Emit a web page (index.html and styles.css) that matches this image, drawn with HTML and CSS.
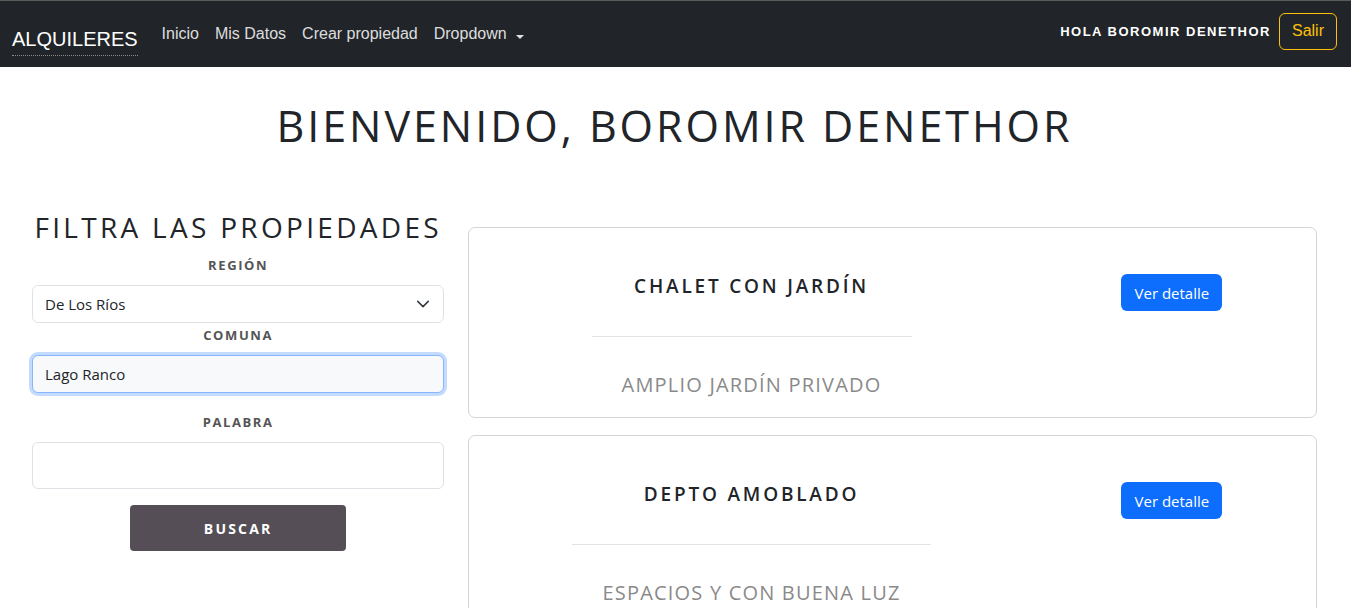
FILE: index.html
```html
<!DOCTYPE html>
<html lang="es">
<head>
<meta charset="utf-8">
<title>Alquileres</title>
<link rel="stylesheet" href="styles.css">
</head>
<body>
<nav class="navbar">
  <div class="nav-left">
    <a class="brand" href="#">ALQUILERES</a>
    <ul class="nav-links">
      <li><a href="#">Inicio</a></li>
      <li><a href="#">Mis Datos</a></li>
      <li><a href="#">Crear propiedad</a></li>
      <li><a href="#" class="dropdown">Dropdown <span class="caret"></span></a></li>
    </ul>
  </div>
  <div class="nav-right">
    <span class="greeting">HOLA BOROMIR DENETHOR</span>
    <button class="btn-salir">Salir</button>
  </div>
</nav>

<main class="page">
  <h1 class="welcome">BIENVENIDO, BOROMIR DENETHOR</h1>
  <div class="row">
    <aside class="col-filter">
      <h2 class="filter-title">FILTRA LAS PROPIEDADES</h2>
      <form class="filter-form">
        <label class="lbl lbl-region">REGIÓN</label>
        <div class="select-wrap">
          <select class="field select">
            <option>De Los Ríos</option>
          </select>
          <svg class="chev" width="14" height="14" viewBox="0 0 16 16"><path d="M2 5l6 6 6-6" fill="none" stroke="#343a40" stroke-width="1.8" stroke-linecap="round" stroke-linejoin="round"/></svg>
        </div>
        <label class="lbl lbl-comuna">COMUNA</label>
        <input class="field focused" type="text" value="Lago Ranco">
        <label class="lbl lbl-palabra">PALABRA</label>
        <input class="field tall" type="text" value="">
        <button type="button" class="btn-buscar">BUSCAR</button>
      </form>
    </aside>
    <section class="col-list">
      <article class="card">
        <div class="card-main">
          <div class="card-text">
            <h3 class="card-title">CHALET CON JARDÍN</h3>
            <hr class="sep">
            <p class="card-sub">AMPLIO JARDÍN PRIVADO</p>
          </div>
        </div>
        <div class="card-side">
          <button class="btn-detalle">Ver detalle</button>
        </div>
      </article>
      <article class="card">
        <div class="card-main">
          <div class="card-text">
            <h3 class="card-title">DEPTO AMOBLADO</h3>
            <hr class="sep">
            <p class="card-sub">ESPACIOS Y CON BUENA LUZ</p>
          </div>
        </div>
        <div class="card-side">
          <button class="btn-detalle">Ver detalle</button>
        </div>
      </article>
    </section>
  </div>
</main>
</body>
</html>
```

FILE: styles.css
```css
* { box-sizing: border-box; }
html, body { margin: 0; padding: 0; }
body {
  background: #fff;
  font-family: "Open Sans", "Noto Sans", sans-serif;
  color: #212529;
  overflow: hidden;
}

.navbar {
  height: 67px;
  background: #212529;
  border-top: 1px solid #5a5a5a;
  display: flex;
  align-items: center;
  justify-content: space-between;
  padding: 0 14px 0 12px;
  font-family: "Liberation Sans", Arial, sans-serif;
}
.nav-left { display: flex; align-items: center; }
.brand {
  color: #fff;
  text-decoration: none;
  font-size: 20px;
  line-height: 24px;
  padding: 9px 0 4px;
  border-bottom: 1px dotted #8a8a8a;
  margin-top: 5px;
}
.nav-links {
  list-style: none;
  margin: 0 0 0 16px;
  padding: 0;
  display: flex;
}
.nav-links a {
  display: block;
  color: rgba(255,255,255,0.86);
  text-decoration: none;
  font-size: 16px;
  line-height: 24px;
  padding: 8px 8px;
}
.dropdown { display: flex; align-items: center; }
.caret {
  display: inline-block;
  width: 0; height: 0;
  margin-left: 5px;
  margin-top: -2px;
  border-top: 4px solid rgba(255,255,255,0.86);
  border-left: 4px solid transparent;
  border-right: 4px solid transparent;
}
.nav-right { display: flex; align-items: center; margin-top: -6px; }
.greeting {
  color: #fff;
  font-weight: bold;
  font-size: 13px;
  letter-spacing: 1.5px;
  margin-right: 8px;
}
.btn-salir {
  font-family: "Liberation Sans", Arial, sans-serif;
  font-size: 16px;
  color: #ffc107;
  background: transparent;
  border: 1px solid #ffc107;
  border-radius: 6px;
  height: 37px;
  width: 58px;
  padding: 0;
}

.page { padding: 0 22px 0 20px; }
.welcome {
  margin: 32px 0 0;
  text-align: center;
  font-size: 43px;
  line-height: 54px;
  font-weight: 400;
  letter-spacing: 2.95px;
  color: #212529;
}
.row {
  display: grid;
  grid-template-columns: 1fr 2fr;
  margin-top: 57px;
}
.col-filter, .col-list { padding: 0 12px; }

.filter-title {
  margin: 0;
  text-align: center;
  white-space: nowrap;
  font-size: 28px;
  line-height: 34px;
  font-weight: 400;
  letter-spacing: 3.3px;
  color: #212529;
}
.filter-form { display: flex; flex-direction: column; }
.lbl {
  text-align: center;
  font-size: 13px;
  line-height: 20px;
  font-weight: 700;
  letter-spacing: 1.6px;
  color: #555;
}
.lbl-region { margin-top: 11px; margin-bottom: 10px; }
.lbl-comuna { margin-top: 2px; margin-bottom: 10px; }
.lbl-palabra { margin-top: 19px; margin-bottom: 10px; }
.field {
  display: block;
  width: 100%;
  height: 38px;
  border: 1px solid #dee2e6;
  border-radius: 6px;
  background: #fff;
  font-family: "Open Sans", "Noto Sans", sans-serif;
  font-size: 15px;
  color: #212529;
  padding: 0 12px;
}
.select-wrap { position: relative; }
.select { appearance: none; -webkit-appearance: none; }
.chev { position: absolute; right: 14px; top: 12px; pointer-events: none; }
.focused {
  border-color: #86b7fe;
  background: #f8f9fa;
  box-shadow: 0 0 0 3px rgba(13,110,253,0.25);
  outline: none;
}
.tall { height: 47px; }
.btn-buscar {
  align-self: center;
  margin-top: 16px;
  width: 216px;
  height: 46px;
  background: #554e56;
  color: #fff;
  border: none;
  border-radius: 4px;
  font-family: "Open Sans", "Noto Sans", sans-serif;
  font-weight: 700;
  font-size: 14px;
  letter-spacing: 2.2px;
}

.col-list {
  margin-top: 17px;
  display: flex;
  flex-direction: column;
  gap: 17px;
}
.card {
  border: 1px solid #d4d4d4;
  border-radius: 7px;
  display: grid;
  grid-template-columns: 2fr 1fr;
  padding: 46px 0 22px;
  height: 191px;
}
.card-main { display: flex; justify-content: center; }
.card-text { display: flex; flex-direction: column; align-items: center; }
.card-title {
  margin: 0;
  font-size: 19px;
  line-height: 24px;
  font-weight: 600;
  letter-spacing: 2.8px;
  color: #212529;
}
.sep {
  align-self: stretch;
  border: none;
  border-top: 1px solid #e3e3e3;
  margin: 38px 0 0;
}
.card-sub {
  margin: 36px 0 0;
  padding: 0 30px;
  font-size: 20px;
  line-height: 24px;
  letter-spacing: 1.2px;
  color: #8a8a8a;
}
.card-side { display: flex; justify-content: center; align-items: flex-start; padding-right: 6px; }
.btn-detalle {
  background: #0d6efd;
  color: #fff;
  border: none;
  border-radius: 6px;
  font-family: "Open Sans", "Noto Sans", sans-serif;
  font-size: 15px;
  height: 37px;
  width: 101px;
  padding: 0;
}
```
